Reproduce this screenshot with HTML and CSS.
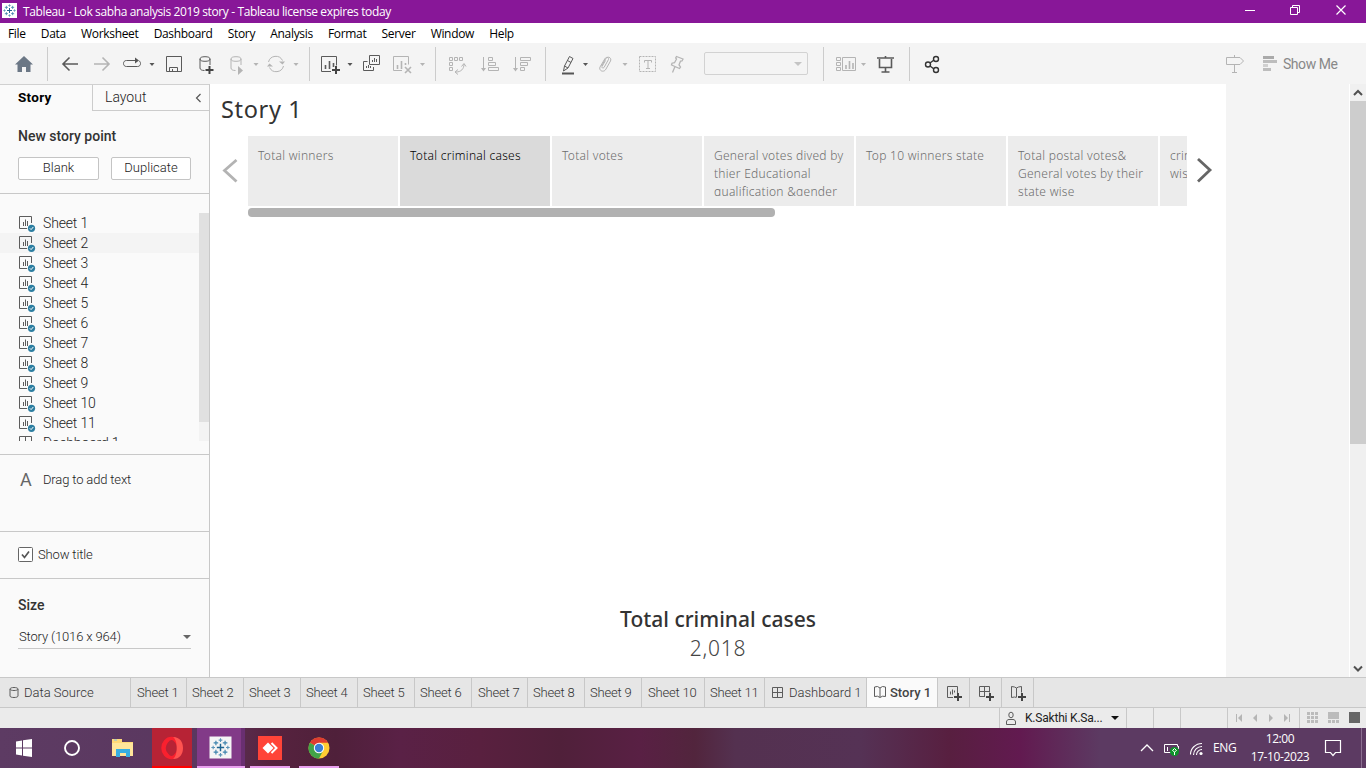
FILE: index.html
```html
<!DOCTYPE html>
<html lang="en">
<head>
<meta charset="utf-8">
<title>Tableau - Lok sabha analysis 2019 story</title>
<link rel="stylesheet" href="styles.css">
</head>
<body>
<svg class="defs" width="0" height="0">
<defs>
<symbol id="tableau" viewBox="0 0 24 24"><path d="M12 8v8M8 12h8" stroke="#1f6591" stroke-width="1.600"/><path d="M12 2v4M10 4h4M12 18v4M10 20h4M4 10v4M2 12h4M20 10v4M18 12h4" stroke="#5b94b8" stroke-width="1.200"/><path d="M7 4.500v5M4.500 7h5M17 4.500v5M14.500 7h5M7 14.500v5M4.500 17h5M17 14.500v5M14.500 17h5" stroke="#3d83ad" stroke-width="1.300"/></symbol>
<symbol id="sheet" viewBox="0 0 18 18"><path d="M9 14.500H1.500v-12h12V9M5.500 8v4M7.500 5.500v6.500M9.500 7v5" fill="none" stroke="#5c5c5c"/><circle cx="13.500" cy="14.300" r="3.600" fill="#2c7ea1"/><path d="M11.800 14.300l1.300 1.300 2.200-2.600" fill="none" stroke="#fff"/></symbol>
<symbol id="grid" viewBox="0 0 14 14"><path d="M1.500 1.500h10v10h-10zM6.500 1.500v10M1.500 6.500h10" fill="none" stroke="#5c5c5c"/></symbol>
<symbol id="book" viewBox="0 0 14 14"><path d="M1.500 2l3-.5L7 3l2.500-1.500 3 .5v9.500l-3-.3L7 12.500l-2.500-1.300-3 .3zM7 3v9" fill="none" stroke="#5c5c5c"/></symbol>
</defs>
</svg>
<div class="screen">
<header class="titlebar">
<span class="applogo"><svg width="15" height="15"><use href="#tableau"/></svg></span>
<span class="apptitle">Tableau - Lok sabha analysis 2019 story - Tableau license expires today</span>
<svg class="winbtns" width="140" height="23" viewBox="1226 0 140 23" fill="none" stroke="#fff"><path d="M1245 10.500h10M1290.500 7.500h7v7h-7zM1292.500 7.500v-2h7v7h-2"/><path d="M1336.500 5.500l9 9M1345.500 5.500l-9 9" stroke-width="1.200"/></svg>
</header>
<nav class="menubar"><span>File</span><span>Data</span><span>Worksheet</span><span>Dashboard</span><span>Story</span><span>Analysis</span><span>Format</span><span>Server</span><span>Window</span><span>Help</span></nav>
<div class="toolbar">
<svg width="47" height="41" viewBox="0 43 47 41"><path d="M24 56l9 8.500h-2.500V72H26v-5h-4v5h-4.500v-7.500H15z" fill="#6b7785"/></svg>
<svg width="39" height="41" viewBox="47 43 39 41"><path d="M47.500 47v34" class="sep"/><path d="M78 64H63M69.500 57.500L63 64l6.500 6.500" class="ic w"/></svg>
<svg width="32" height="41" viewBox="86 43 32 41"><path d="M94 64h15M102.500 57.500L109 64l-6.500 6.500" class="off w"/></svg>
<svg width="42" height="41" viewBox="118 43 42 41"><path d="M136 60.500h-9.500c-2 0-3 1.300-3 3s1 3 3 3h11c2 0 3-1.300 3-3 0-1.300-.7-2.300-1.500-2.700" class="ic"/><path d="M135 57.500l4 3-4 3z" class="fill"/><path d="M149.500 63h5l-2.500 3z" class="fill"/></svg>
<svg width="30" height="41" viewBox="160 43 30 41"><path d="M166.500 56.500h15v15h-15zM169.500 71.500v-4h8v4M172.500 71v-2" class="ic"/></svg>
<svg width="34" height="41" viewBox="190 43 34 41"><ellipse cx="205" cy="59" rx="5" ry="2.300" class="ic"/><path d="M200 59v9c0 1.500 1.500 2.500 4.500 2.500M210 59v6" class="ic"/><path d="M209.500 66v8M205.500 70h8" class="plus"/></svg>
<svg width="38" height="41" viewBox="224 43 38 41"><ellipse cx="236" cy="59" rx="5" ry="2.300" class="off"/><path d="M231 59v9c0 1.500 1.500 2.500 4.500 2.500M241 59v6" class="off"/><path d="M238 66l5 4.500-5 4.500z" class="foff"/><path d="M253.500 63h5l-2.500 3z" class="foff"/></svg>
<svg width="42" height="41" viewBox="262 43 42 41"><path d="M268.500 62a7.500 7.500 0 0 1 14-1.500M283.500 66a7.500 7.500 0 0 1-14 1.500" class="off"/><path d="M279 61.500h6l-2.500 3zM267 66.500h6l-3.500-3z" class="foff"/><path d="M293.500 63h5l-2.500 3z" class="foff"/></svg>
<svg width="52" height="41" viewBox="304 43 52 41"><path d="M309.500 47v34" class="sep"/><path d="M331 71.500h-9.500v-15h15v9" class="ic"/><path d="M325.500 65v4M329.500 61v8M333.500 63v4" class="ic w"/><path d="M336 66v8M332 70h8" class="plus"/><path d="M347.500 63h5l-2.500 3z" class="fill"/></svg>
<svg width="32" height="41" viewBox="356 43 32 41"><path d="M369.500 55.500h10v9h-10zM367.500 61.500h-4v9h10V67M372.500 62v-2M374.500 62v-4M376.500 62v-3M366.500 68v-2M368.500 68v-3M370.500 68v-2" class="ic"/></svg>
<svg width="44" height="41" viewBox="388 43 44 41"><path d="M402 70.500h-8.500v-14h15v8" class="off"/><path d="M397.500 65v4M401.500 61v8M405.500 63v2M405 67l6 6M411 67l-6 6" class="off w"/><path d="M420 63h5l-2.500 3z" class="foff"/></svg>
<svg width="37" height="41" viewBox="432 43 37 41"><path d="M435.500 47v34" class="sep"/><path d="M449.500 57.500h3v3h-3zM454.500 57.500h3v3h-3zM459.500 57.500h3v3h-3zM449.500 62.500h3v3h-3zM449.500 67.500h3v3h-3zM456 72c5 0 8-3 8-8M461.500 66.500l2.500-3 2 3M458 69.500l-3 2.500 3 2.500" class="off"/></svg>
<svg width="36" height="41" viewBox="469 43 36 41"><path d="M483.500 57v13M488.500 57.500h4v3h-4zM488.500 62.500h7v3h-7zM488.500 67.500h10v3h-10z" class="off"/><path d="M481 68h5l-2.500 3.500z" class="foff"/></svg>
<svg width="36" height="41" viewBox="505 43 36 41"><path d="M515.500 57v13M520.500 57.500h10v3h-10zM520.500 62.500h7v3h-7zM520.500 67.500h4v3h-4z" class="off"/><path d="M513 68h5l-2.500 3.500z" class="foff"/></svg>
<svg width="51" height="41" viewBox="541 43 51 41"><path d="M545.500 47v34" class="sep"/><path d="M563.500 71l1-5 5-9.500 3.500 2-5 9.500zM564.500 66l3.500 2M567.500 60.500l3.500 2" class="ic"/><path d="M562 73.500h12" stroke="#555" stroke-width="2"/><path d="M583 63h5l-2.500 3z" class="fill"/></svg>
<svg width="41" height="41" viewBox="592 43 41 41"><path d="M601.500 66l4-7c2-3.500 6.500-1.500 5 2l-4.500 8c-2 4-7.500 2-6-2l5-8.500c1.500-2 4-1 3.500 1l-4.500 8c-1 1-2.500.5-2-1l3.500-6" class="off"/><path d="M622.500 63h5l-2.500 3z" class="foff"/></svg>
<svg width="30" height="41" viewBox="633 43 30 41"><path d="M639.500 56.500h16v15h-16z" class="off" stroke-dasharray="2 1"/><path d="M644.500 62.500v-2h7v2M648 60.500v7.500M646 68.500h4" class="off"/></svg>
<svg width="30" height="41" viewBox="663 43 30 41"><path d="M676.500 56.500l6.500 2.500-1 2-1.500.2-1.500 3.600 1.500 2.200-1 1.500-8-3.500.5-1.800 2.500-.5 2-3.700-.8-1zM675 66.500l-2.500 6" class="off" stroke-width="1.300"/></svg>
<span class="fitbox"><i class="tri"></i></span>
<svg width="62" height="41" viewBox="808 43 62 41"><path d="M823.500 47v34" class="sep"/><path d="M836.500 57.500h4v3h-4zM836.500 62.500h4v3h-4zM836.500 67.500h4v3h-4zM842.500 57.500h13v13h-13z" class="off"/><path d="M846 65v4M849.500 61v8M853 63v6" class="off w"/><path d="M861 63h5l-2.500 3z" class="foff"/></svg>
<svg width="34" height="41" viewBox="870 43 34 41"><path d="M877 58h17M885.500 56v2M879.500 59v8.500h12V59M885.500 67.500v4M881.500 72h8" class="ic w"/></svg>
<svg width="56" height="41" viewBox="904 43 56 41"><path d="M909.500 47v34" class="sep"/><path d="M930 63l4-3M930 66l4 3" stroke="#333" stroke-width="1.400"/><g fill="none" stroke="#333" stroke-width="1.400"><circle cx="928" cy="64.500" r="2.500"/><circle cx="936" cy="59" r="2.500"/><circle cx="936" cy="70" r="2.500"/></g></svg>
<svg class="push" width="42" height="41" viewBox="1216 43 42 41"><path d="M1226.500 57.500h13.500l3.500 3.500-3.500 3.500h-13.500zM1234.500 55v2M1234.500 65v7.500M1232 72.500h5" class="off"/></svg>
<svg width="25" height="41" viewBox="1258 43 25 41"><path d="M1263 56h11v3h-11z" fill="#aaa"/><path d="M1263 60h14v3h-14zM1263 68h8v3h-8z" fill="#bdbdbd"/><path d="M1263 64h5v3h-5z" fill="#d0d0d0"/></svg>
<span class="showme">Show Me</span>
</div>
<div class="main">
<aside class="side">
<div class="sidetabs"><b>Story</b><span class="lay"><span>Layout</span><svg width="7" height="10"><path d="M5.500 1L1.500 5l4 4" fill="none" stroke="#555" stroke-width="1.200"/></svg></span></div>
<section class="newpoint"><b>New story point</b><div class="btns"><button class="blank">Blank</button><button class="dup">Duplicate</button></div></section>
<section class="sheets"><div class="list">
<div class="row"><svg width="18" height="18"><use href="#sheet"/></svg>Sheet 1</div>
<div class="row hov"><svg width="18" height="18"><use href="#sheet"/></svg>Sheet 2</div>
<div class="row"><svg width="18" height="18"><use href="#sheet"/></svg>Sheet 3</div>
<div class="row"><svg width="18" height="18"><use href="#sheet"/></svg>Sheet 4</div>
<div class="row"><svg width="18" height="18"><use href="#sheet"/></svg>Sheet 5</div>
<div class="row"><svg width="18" height="18"><use href="#sheet"/></svg>Sheet 6</div>
<div class="row"><svg width="18" height="18"><use href="#sheet"/></svg>Sheet 7</div>
<div class="row"><svg width="18" height="18"><use href="#sheet"/></svg>Sheet 8</div>
<div class="row"><svg width="18" height="18"><use href="#sheet"/></svg>Sheet 9</div>
<div class="row"><svg width="18" height="18"><use href="#sheet"/></svg>Sheet 10</div>
<div class="row"><svg width="18" height="18"><use href="#sheet"/></svg>Sheet 11</div>
<div class="row"><svg width="18" height="18"><path d="M1.500 2.500h12v12h-12zM7.500 2.500v12M1.500 8.500h12" fill="none" stroke="#5c5c5c"/></svg>Dashboard 1</div>
</div><div class="track"><div></div></div></section>
<section class="drag"><span class="biga">A</span><span class="sm">Drag to add text</span></section>
<section class="show"><svg width="15" height="15"><rect x=".5" y=".5" width="14" height="14" rx="1" fill="#fff" stroke="#666"/><path d="M4 7.500l2.500 3L11 4.500" fill="none" stroke="#555" stroke-width="1.700"/></svg><span class="sm">Show title</span></section>
<section class="size"><b>Size</b><div class="sel"><span class="sm">Story (1016 x 964)</span><i class="tri dark"></i></div></section>
</aside>
<main class="story">
<h1>Story 1</h1>
<div class="nav">
<svg width="38" height="70"><path d="M26.500 24L14.500 34.500l12 11" fill="none" stroke="#b3b3b3" stroke-width="2.800"/></svg>
<div class="points">
<div class="pt">Total winners</div><div class="pt on">Total criminal cases</div><div class="pt">Total votes</div><div class="pt cut">General votes dived by<br>thier Educational<br>qualification &amp;gender</div><div class="pt">Top 10 winners state</div><div class="pt">Total postal votes&amp;<br>General votes by their<br>state wise</div><div class="pt">crimi<br>wise</div>
</div>
<svg width="39" height="70"><path d="M11 23l12 11-12 11.500" fill="none" stroke="#666" stroke-width="2.800"/></svg>
</div>
<div class="hbar"></div>
<div class="sheetview"><h2>Total criminal cases</h2><p>2,018</p></div>
</main>
<div class="vbar"><svg width="16" height="17"><path d="M4 11l4-4 4 4" fill="none" stroke="#505050" stroke-width="2"/></svg><div></div><svg width="16" height="17"><path d="M4 6.500l4 4 4-4" fill="none" stroke="#505050" stroke-width="2"/></svg></div>
</div>
<div class="tabs">
<span class="t w130 ds"><svg width="11" height="14"><path d="M2 3v7c0 2 8 2 8 0V3c0-2-8-2-8 0c0 2 8 2 8 0" fill="none" stroke="#5c5c5c"/></svg>Data Source</span><span class="t w55">Sheet 1</span><span class="t w56">Sheet 2</span><span class="t w56">Sheet 3</span><span class="t w56">Sheet 4</span><span class="t w56">Sheet 5</span><span class="t w56">Sheet 6</span><span class="t w55">Sheet 7</span><span class="t w56">Sheet 8</span><span class="t w56">Sheet 9</span><span class="t w62">Sheet 10</span><span class="t w59">Sheet 11</span><span class="t w101"><svg width="14" height="14"><use href="#grid"/></svg>Dashboard 1</span><span class="t act"><svg width="14" height="14"><use href="#book"/></svg>Story 1</span>
<span class="t ico"><svg width="31" height="29"><path d="M15 19.500H9.500v-11h10v7M12.500 13.500v3M14.500 11.500v5M16.500 12.500v2" fill="none" stroke="#5c5c5c"/><path d="M20 15v8M16 19h8" class="plus"/></svg></span>
<span class="t ico"><svg width="31" height="29"><path d="M15 18.500H9.500v-10h10v6M14.500 8.500v10M9.500 13.500h10" fill="none" stroke="#5c5c5c"/><path d="M20 15v8M16 19h8" class="plus"/></svg></span>
<span class="t ico"><svg width="31" height="29"><path d="M14.500 19.500l-2-.5-3 .5v-11l3 .5 2 1 2-1 3-.5v6M14.500 10v9" fill="none" stroke="#5c5c5c"/><path d="M20 15v8M16 19h8" class="plus"/></svg></span>
</div>
<div class="status">
<span class="user"><svg width="12" height="15" fill="none" stroke="#5c5c5c"><ellipse cx="6" cy="4" rx="2.200" ry="2.800"/><path d="M1.500 13.500V11c0-1.500 1-2.500 2.500-2.500h4c1.500 0 2.500 1 2.500 2.500v2.500z"/></svg><span>K.Sakthi K.Sa...</span><svg width="9" height="6"><path d="M0 1h8L4 5z" fill="#111"/></svg></span>
<span class="cell c26"></span><span class="cell c26"></span><span class="cell c46"></span>
<svg width="71" height="20" viewBox="1228 708 71 20" class="cell"><path d="M1236 714h1v8h-1zM1242 714v8l-4-4zM1257 714v8l-4-4zM1269 714v8l4-4zM1284 714v8l4-4zM1289 714h1v8h-1z" fill="#b5b5b5"/></svg>
<svg width="66" height="20" viewBox="1300 708 66 20"><path d="M1307 712h3v3h-3zM1311 712h3v3h-3zM1315 712h3v3h-3zM1307 716h3v3h-3zM1311 716h3v3h-3zM1315 716h3v3h-3zM1307 720h3v3h-3zM1311 720h3v3h-3zM1315 720h3v3h-3zM1328 712h11v7h-11zM1328 720h3v3h-3zM1332 720h3v3h-3zM1336 720h3v3h-3z" fill="#bbb"/><path d="M1349 712h11v11h-11z" fill="#666"/></svg>
</div>
<footer class="taskbar">
<svg width="48" height="40" fill="#fff"><path d="M16 13.500l6-1v7h-6zM23 12.300l9-1.300v8.500h-9zM16 20.500h6v7l-6-1zM23 20.500h9V29l-9-1.300z"/></svg>
<svg width="48" height="40"><circle cx="24" cy="20" r="7" fill="none" stroke="#fff" stroke-width="1.900"/></svg>
<svg width="56" height="40"><path d="M16 11h10v3h11v14H16z" fill="#ffd978"/><path d="M16 15h21v13H16z" fill="#ffe59a"/><path d="M20 29v-8h14v8h-4v-4h-6v4z" fill="#37aee2"/><path d="M18 12h3" stroke="#7cc0e8"/></svg>
<svg width="40" height="40"><path d="M0 0h40v40H0z" fill="#b72335"/><path d="M0 38h40v2H0z" fill="#f00"/><ellipse cx="19.500" cy="20" rx="8" ry="9" fill="none" stroke="#f9202e" stroke-width="4.500"/><path d="M21 9c7 0 10 5 10 11s-3 11-10 11c5-3 5-19 0-22z" fill="#ff5350"/><ellipse cx="19.500" cy="20" rx="4.500" ry="8" fill="#b72335"/></svg>
<svg class="g5" width="48" height="40"><path d="M0 0h44v40H0z" fill="#823a88"/><path d="M44 0h4v40h-4z" fill="#692f71"/><path d="M0 38h48v2H0z" fill="#e9a0ef"/><path d="M12.500 8.500h22v22h-22z" fill="#f5f5f5"/><use href="#tableau" x="12.500" y="8.500" width="22" height="22"/></svg>
<svg class="g5" width="40" height="40"><path d="M0 38h40v2H0z" fill="#e9a0ef"/><path d="M8 8h24v24H8z" fill="#ff4438"/><path d="M12.500 20l5.500-5.500 5.500 5.500-5.500 5.500z" fill="#fff"/><path d="M21.500 15l5 5-5 5" fill="none" stroke="#fff" stroke-width="2"/></svg>
<svg class="g9" width="40" height="40"><path d="M0 38h40v2H0z" fill="#e9a0ef"/><circle cx="20" cy="20" r="10.500" fill="#fc3"/><path d="M20 20L10.900 14.700A10.500 10.500 0 0 1 29.100 14.700H20z" fill="#df3c30"/><path d="M10.900 14.700A10.500 10.500 0 0 0 20 30.500L24.500 22 20 20z" fill="#42a348"/><circle cx="20" cy="20" r="5.200" fill="#fff"/><circle cx="20" cy="20" r="4.200" fill="#3b7fd4"/></svg>
<svg class="push" width="76" height="40" viewBox="1134 728 76 40" fill="none" stroke="#fff"><path d="M1141 751l6-6 6 6" stroke-width="1.300"/><path d="M1172 752.500h-7.500v-8h13v2M1178.500 746v3M1167.500 747v4"/><circle cx="1174.500" cy="751.500" r="4.500" fill="#0c9428" stroke="none"/><path d="M1174.500 755v-3l-2-1.500 2-2 2 2-2 1.500"/><path d="M1190.500 754.500c0-6 5-11 11.500-11M1193.500 755c0-5 4-8.500 8.500-8.500M1196.500 755c0-3 2.500-5.500 5.500-5.500" stroke-width="1.100"/><circle cx="1201" cy="753.500" r="1.600" fill="#fff" stroke="none"/></svg>
<span class="eng">ENG</span>
<span class="clock"><span>12:00</span><span>17-10-2023</span></span>
<svg width="50" height="40" viewBox="1316 728 50 40" fill="none" stroke="#fff"><path d="M1325.500 740.500h15v12h-5l-2.500 3-2.500-3h-5z" stroke-width="1.200"/><path d="M1361.500 728v40" stroke="#8b6f90"/></svg>
</footer>
</div>
</body>
</html>
```

FILE: styles.css
```css
* { box-sizing: border-box; }
body { margin: 0; font-family: Roboto, "Liberation Sans", sans-serif; }
svg { display: block; flex: none; }
.defs { position: absolute; }
.screen { width: 1366px; height: 768px; display: flex; flex-direction: column; overflow: hidden; white-space: nowrap; background: #fff; }
.titlebar { height: 23px; background: #881798; color: #fff; display: flex; align-items: center; padding-left: 2px; font: 12px "Open Sans", sans-serif; letter-spacing: -0.38px; }
.applogo { background: #fff; width: 15px; height: 15px; margin-right: 6px; margin-top: -2px; }
.winbtns { margin-left: auto; }
.menubar { height: 20px; display: flex; align-items: center; padding-left: 8px; gap: 15.200px; font: 12px "Open Sans", sans-serif; letter-spacing: -0.330px; color: #000; }
.toolbar { height: 41px; background: #f4f4f4; display: flex; align-items: center; }
.sep { stroke: #ccc; fill: none; }
.ic { stroke: #5a5a5a; fill: none; }
.off { stroke: #b4b4b4; fill: none; }
.w { stroke-width: 1.6; }
.fill { fill: #555; }
.foff { fill: #b4b4b4; }
.plus { stroke: #444; stroke-width: 2; fill: none; }
.push { margin-left: auto; }
.fitbox { width: 104px; height: 23px; margin-left: 11px; border: 1px solid #d2d2d2; border-radius: 2px; display: flex; align-items: center; justify-content: flex-end; padding-right: 5px; }
.tri { width: 0; height: 0; border: 4px solid transparent; border-top-color: #c4c4c4; border-bottom: 0; }
.tri.dark { border-top-color: #666; }
.showme { width: 83px; font-size: 14px; letter-spacing: -0.450px; color: #888; }
.main { height: 593px; display: flex; background: #f4f4f4; }
.side { width: 210px; background: #fafafa; border-right: 1px solid #c8c8c8; border-top: 1px solid #d0d0d0; color: #222; display: flex; flex-direction: column; font-size: 14px; font-weight: 300; letter-spacing: -0.150px; }
.side b { font-weight: 500; color: #333; letter-spacing: 0; }
.sidetabs { height: 26px; display: flex; line-height: 25px; }
.side .sidetabs b { width: 92px; padding-left: 18px; color: #000; font-weight: 700; font-size: 13.500px; letter-spacing: 0.300px; }
.lay { flex: 1; display: flex; justify-content: space-between; align-items: center; padding: 0 7px 0 12px; border-left: 1px solid #ccc; border-bottom: 1px solid #ccc; letter-spacing: 0; }
.side section { border-bottom: 1px solid #c8c8c8; flex: none; }
.newpoint { height: 83px; padding: 16px 18px 0; line-height: 18px; }
.btns { display: flex; justify-content: space-between; margin-top: 12px; }
.btns button { height: 23px; background: #fff; border: 1px solid #c4c4c4; border-radius: 2px; padding: 0 0 2px; font: 300 13px Roboto, sans-serif; color: #222; }
.blank { width: 81px; }
.dup { width: 80px; }
.side .sheets { height: 261px; padding: 19px 0 13px; display: flex; }
.list { width: 199px; height: 228px; overflow: hidden; }
.row { height: 20px; display: flex; align-items: center; padding-left: 18px; gap: 7px; }
.hov { background: #f4f4f4; }
.track { width: 10px; height: 228px; background: #f3f3f3; }
.track div { height: 209px; background: #e0e0e0; }
.drag { height: 77px; display: flex; align-items: flex-start; padding: 15px 0 0 20px; line-height: 20px; }
.biga { width: 23px; font-size: 18px; font-weight: 400; color: #666; }
.sm { font-size: 13px; }
.show { height: 47px; display: flex; align-items: center; gap: 5px; padding: 0 0 1px 18px; }
.side .size { border: 0; padding: 17px 18px 0; line-height: 18px; }
.sel { display: flex; justify-content: space-between; align-items: center; border-bottom: 1px solid #c8c8c8; height: 23px; margin-top: 12px; padding-left: 1px; }
.story { width: 1016px; background: #fff; font-family: "Noto Sans", sans-serif; overflow: hidden; }
h1 { margin: 0; padding-left: 11px; height: 52px; line-height: 50px; font-size: 23.500px; letter-spacing: 0.650px; font-weight: 400; color: #333; }
.nav { display: flex; height: 70px; }
.points { width: 939px; display: flex; gap: 2px; overflow: hidden; }
.pt { flex: none; width: 150px; height: 70px; padding: 11px 0 0 10px; background: #ececec; color: #6c6c6c; font: 300 12px/18px "Noto Sans", sans-serif; letter-spacing: 0.280px; overflow: hidden; }
.cut { border-bottom: 10px solid #ececec; }
.on { background: #dadada; color: #000; }
.hbar { width: 527px; height: 9px; margin: 2px 0 0 38px; border-radius: 4px; background: #b1b1b1; }
.sheetview { margin-top: 387px; text-align: center; color: #333; }
h2 { margin: 0; font-size: 21px; font-weight: 500; line-height: 30px; }
p { margin: 0; font-size: 21px; line-height: 29px; color: #444; font-weight: 300; letter-spacing: 0.800px; }
.vbar { margin-left: auto; width: 17px; border-left: 1px solid #fff; background: #f0f0f0; display: flex; flex-direction: column; }
.vbar div { height: 343px; background: #cdcdcd; margin-bottom: auto; }
.tabs { height: 31px; border: solid #c8c8c8; border-width: 1px 0; background: #e6e6e6; display: flex; font-size: 13px; font-weight: 300; letter-spacing: -0.200px; color: #333; }
.t { display: flex; align-items: center; justify-content: flex-start; padding-left: 6px; gap: 4px; border-right: 1px solid #c8c8c8; flex: none; }
.w130 { width: 131px; }
.t.ds { padding-left: 8px; gap: 5px; letter-spacing: 0; }
.w55 { width: 56px; }
.w56 { width: 57px; padding-left: 5px; }
.w62 { width: 63px; }
.w59 { width: 60px; padding-left: 5px; }
.w101 { width: 102px; letter-spacing: 0; }
.act { width: 71px; background: #fafafa; color: #444; font-weight: 500; padding-bottom: 1px; letter-spacing: 0; gap: 3px; }
.ico { width: 32px; padding-left: 0; }
.status { height: 20px; background: #ebebeb; display: flex; padding-left: 999px; }
.cell { border-right: 1px solid #c8c8c8; box-sizing: content-box; flex: none; }
.user { flex: none; width: 128px; border: solid #c8c8c8; border-width: 0 1px; display: flex; align-items: center; padding-left: 5px; font-size: 12px; letter-spacing: -0.200px; color: #222; gap: 8px; }
.c26 { width: 26px; }
.c46 { width: 46px; }
.taskbar { height: 40px; display: flex; color: #fff; font: 12px "Open Sans", sans-serif; background: linear-gradient(90deg, #5d3b63 0, #5a375f 200px, #57233f 270px, #4f203a 335px, #5a2146 400px, #59203f 480px, #50203a 560px, #592044 640px, #52253d 695px, #543150 735px, #553255 860px, #581f40 950px, #621a50 1020px, #5c3a62 1100px, #5c3a62 100%); }
.g5 { margin-left: 5px; }
.g9 { margin-left: 9px; }
.eng { width: 34px; padding: 0 0 0 3px; line-height: 39px; letter-spacing: -0.300px; }
.clock { width: 72px; display: flex; flex-direction: column; text-align: center; line-height: 18px; padding-top: 2px; letter-spacing: -0.400px; }
```
